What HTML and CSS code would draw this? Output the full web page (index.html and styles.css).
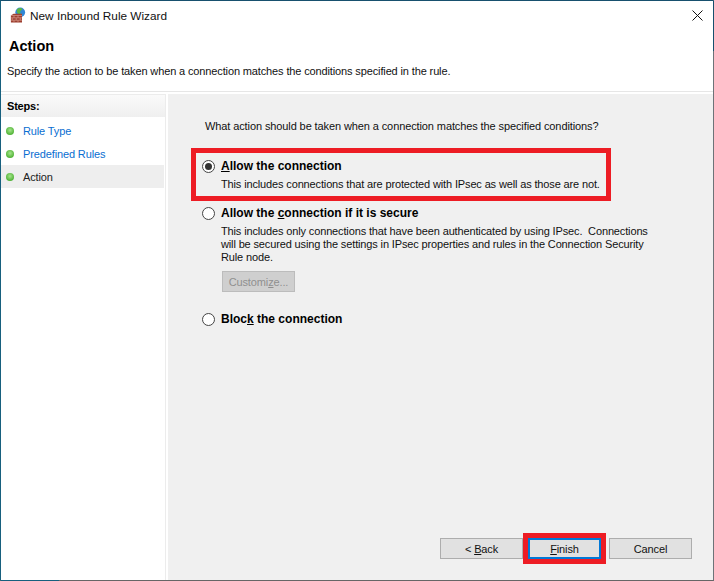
FILE: index.html
```html
<!DOCTYPE html>
<html lang="en">
<head>
<meta charset="utf-8">
<title>New Inbound Rule Wizard</title>
<link rel="stylesheet" href="styles.css">
</head>
<body>
<div class="window">
  <div class="titlebar">
    <svg class="app-icon" width="16" height="16" viewBox="0 0 18 18">
      <circle cx="11.500" cy="6" r="5.500" fill="#2f86d6"/>
      <path d="M8 2.500c2-1.800 5-1.500 6 0-.5 1.500-2 1-2.500 2.500-.5 1.500 1.500 2.500 0 4L9 7.500C8 6 7 4.500 8 2.500z" fill="#5cb544"/>
      <path d="M1 9.500 4 7.500h9.500v10H1z" fill="#9c3f30"/>
      <path d="M1 9.500h12.500M1 12.200h12.500M1 14.900h12.500M4.500 9.500v2.700M9 9.500v2.700M2.500 12.200v2.700M7 12.200v2.700M11.500 12.200v2.700M4.500 14.900v2.600M9 14.900v2.600" stroke="#d99a8a" stroke-width=".8" fill="none"/>
    </svg>
    <span class="title">New Inbound Rule Wizard</span>
    <svg class="close" width="11" height="11" viewBox="0 0 11 11"><path d="M.5.500l10 10M10.500.500l-10 10" stroke="#111" stroke-width="1" fill="none"/></svg>
  </div>
  <header class="head">
    <h1>Action</h1>
    <p>Specify the action to be taken when a connection matches the conditions specified in the rule.</p>
  </header>
  <div class="body">
    <aside class="steps">
      <div class="steps-head">Steps:</div>
      <ul class="step-list">
        <li class="step"><i class="dot"></i><a>Rule Type</a></li>
        <li class="step"><i class="dot"></i><a>Predefined Rules</a></li>
        <li class="step current"><i class="dot"></i><span>Action</span></li>
      </ul>
    </aside>
    <main class="main">
      <div class="content">
        <p class="question">What action should be taken when a connection matches the specified conditions?</p>
        <div class="option first">
          <div class="opt-line"><span class="radio checked"></span><b><u>A</u>llow the connection</b></div>
          <p class="desc">This includes connections that are protected with IPsec as well as those are not.</p>
        </div>
        <div class="option second">
          <div class="opt-line"><span class="radio"></span><b>Allow the <u>c</u>onnection if it is secure</b></div>
          <p class="desc">This includes only connections that have been authenticated by using IPsec.&nbsp; Connections<br>will be secured using the settings in IPsec properties and rules in the Connection Security<br>Rule node.</p>
          <button class="customize" disabled>Customi<u>z</u>e...</button>
        </div>
        <div class="option third">
          <div class="opt-line"><span class="radio"></span><b>Bloc<u>k</u> the connection</b></div>
        </div>
      </div>
      <div class="buttons">
        <button class="btn">&lt; <u>B</u>ack</button>
        <button class="btn primary"><u>F</u>inish</button>
        <button class="btn cancel">Cancel</button>
      </div>
    </main>
  </div>
  <div class="mark mark-option"></div>
  <div class="mark mark-finish"></div>
</div>
</body>
</html>
```
FILE: styles.css
```css
* { box-sizing: border-box; }
html, body { margin: 0; padding: 0; }
body { width: 714px; height: 581px; overflow: hidden; background: #fff; font-family: "Liberation Sans", Arial, sans-serif; font-size: 11px; letter-spacing: -0.13px; color: #111; }
p, h1, ul { margin: 0; padding: 0; }
.window { position: relative; width: 714px; height: 581px; display: flex; flex-direction: column; background: #fff; border-top: 1px solid #17506e; border-left: 1px solid #17607e; border-right: 1px solid #6d7378; border-bottom: 1px solid #666; }
.window::before { content: ""; position: absolute; left: 0; bottom: -1px; width: 58px; height: 1px; background: #17607e; }
.window::after { content: ""; position: absolute; right: -1px; top: 0; width: 1px; height: 50px; background: #17506e; }
.titlebar { height: 30px; flex: none; display: flex; align-items: center; padding: 0 10px 0 9px; }
.app-icon { margin-right: 4px; margin-bottom: 2px; flex: none; }
.title { font-size: 11.800px; letter-spacing: 0; color: #111; }
.close { margin-left: auto; margin-bottom: 2px; }
.head { height: 61px; flex: none; padding-left: 8px; border-bottom: 1px solid #e6e6e6; }
h1 { font-size: 14.500px; letter-spacing: 0; font-weight: bold; line-height: 16px; padding-top: 7px; height: 23px; color: #000; }
.head p { line-height: 16px; margin-top: 9px; margin-left: -2px; }
.body { flex: 1; display: flex; padding-top: 2px; min-height: 0; }
.steps { width: 165px; flex: none; border-right: 1px solid #ececec; border-top: 1px solid #ececec; }
.steps-head { height: 22px; background: linear-gradient(#fafafa, #efefef); padding-left: 6px; font-weight: bold; letter-spacing: -0.2px; line-height: 22px; color: #000; }
.step-list { list-style: none; padding-top: 2px; }
.step { height: 23px; display: flex; align-items: center; padding-left: 5px; margin-right: 1px; }
.step a { color: #0a6ed1; }
.step span { color: #222; }
.step.current { background: #eeeeee; }
.dot { width: 8px; height: 8px; border-radius: 50%; margin-right: 9px; flex: none; background: radial-gradient(circle at 50% 40%, #a6e58c, #46ad2c 80%); }
.main { flex: 1; margin-left: 2px; background: #f0f0f0; display: flex; flex-direction: column; justify-content: space-between; min-width: 0; }
.content { padding: 24px 0 0 37px; }
.question { line-height: 16px; letter-spacing: -0.105px; }
.first { margin-top: 24px; }
.second { margin-top: 14px; }
.third { margin-top: 19px; }
.opt-line { display: flex; align-items: center; height: 16px; }
.opt-line b { font-weight: bold; font-size: 12px; letter-spacing: 0; color: #000; }
.radio { width: 13px; height: 13px; border-radius: 50%; border: 1px solid #444; background: #fff; margin-left: -3px; margin-right: 6px; flex: none; display: flex; align-items: center; justify-content: center; }
.radio.checked::after { content: ""; width: 7px; height: 7px; border-radius: 50%; background: #333; }
.desc { margin: 4px 0 0 16px; line-height: 13px; letter-spacing: -0.14px; color: #111; }
.customize { display: block; margin: 7px 0 0 17px; width: 73px; height: 21px; padding: 0; border: 1px solid #bcbcbc; background: #cfcfcf; color: #8f8f8f; font: 11px "Liberation Sans", Arial, sans-serif; letter-spacing: -0.13px; }
.buttons { display: flex; justify-content: flex-end; padding: 0 21px 21px 0; }
.btn { width: 83px; height: 21px; padding: 0; border: 1px solid #adadad; background: #e1e1e1; color: #111; font: 11px "Liberation Sans", Arial, sans-serif; letter-spacing: -0.13px; }
.primary { width: 73px; margin-left: 5px; border: 2px solid #0078d7; }
.cancel { margin-left: 8px; }
.mark { position: absolute; border: 5px solid #ed1c24; pointer-events: none; }
.mark-option { left: 190px; top: 147px; width: 420px; height: 53px; }
.mark-finish { left: 522px; top: 532px; width: 83px; height: 31px; }
```
